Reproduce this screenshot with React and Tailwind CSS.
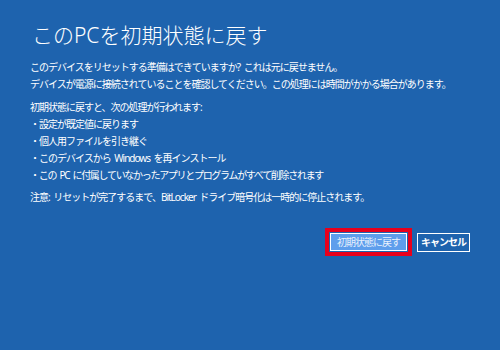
export default function App() {
  const font = { fontFamily: '"Noto Sans", "Noto Sans CJK JP", sans-serif' };
  return (
    <div
      className="w-[500px] h-[350px] bg-[#1e63ae] text-white pl-[30px] pr-[30px] pt-[20px] overflow-hidden"
      style={font}
    >
      <h1 className="ml-[2px] text-[21px] leading-[30px] font-light tracking-[0px]">
        このPCを初期状態に戻す
      </h1>
      <div className="mt-[9px] text-[10px] leading-[17px] tracking-[-1px] [word-spacing:2px]">
        <p>このデバイスをリセットする準備はできていますか? これは元に戻せません。</p>
        <p>デバイスが電源に接続されていることを確認してください。この処理には時間がかかる場合があります。</p>
      </div>
      <div className="mt-[6px] text-[10px] leading-[17px] tracking-[-1px] [word-spacing:2px]">
        <p>初期状態に戻すと、次の処理が行われます:</p>
        <p>・設定が既定値に戻ります</p>
        <p>・個人用ファイルを引き継ぐ</p>
        <p>・このデバイスから Windows を再インストール</p>
        <p className="tracking-[-1.3px]">・この PC に付属していなかったアプリとプログラムがすべて削除されます</p>
      </div>
      <p className="mt-[5px] text-[10px] leading-[17px] tracking-[-1px] [word-spacing:2px]">
        注意: リセットが完了するまで、BitLocker ドライブ暗号化は一時的に停止されます。
      </p>
      <div className="mt-[22px] flex justify-end items-center gap-[5px]">
        <div className="w-[87px] h-[28px] border-4 border-[#e8001c] p-px">
          <div className="w-full h-full border border-white bg-[#5e9eec] flex items-center justify-center text-[10px] tracking-[-1px] text-[#e8f1fc]">
            初期状態に戻す
          </div>
        </div>
        <div className="w-[53px] h-[19px] border border-white flex items-center justify-center text-[10px] font-bold tracking-[-1px]">
          キャンセル
        </div>
      </div>
    </div>
  );
}
